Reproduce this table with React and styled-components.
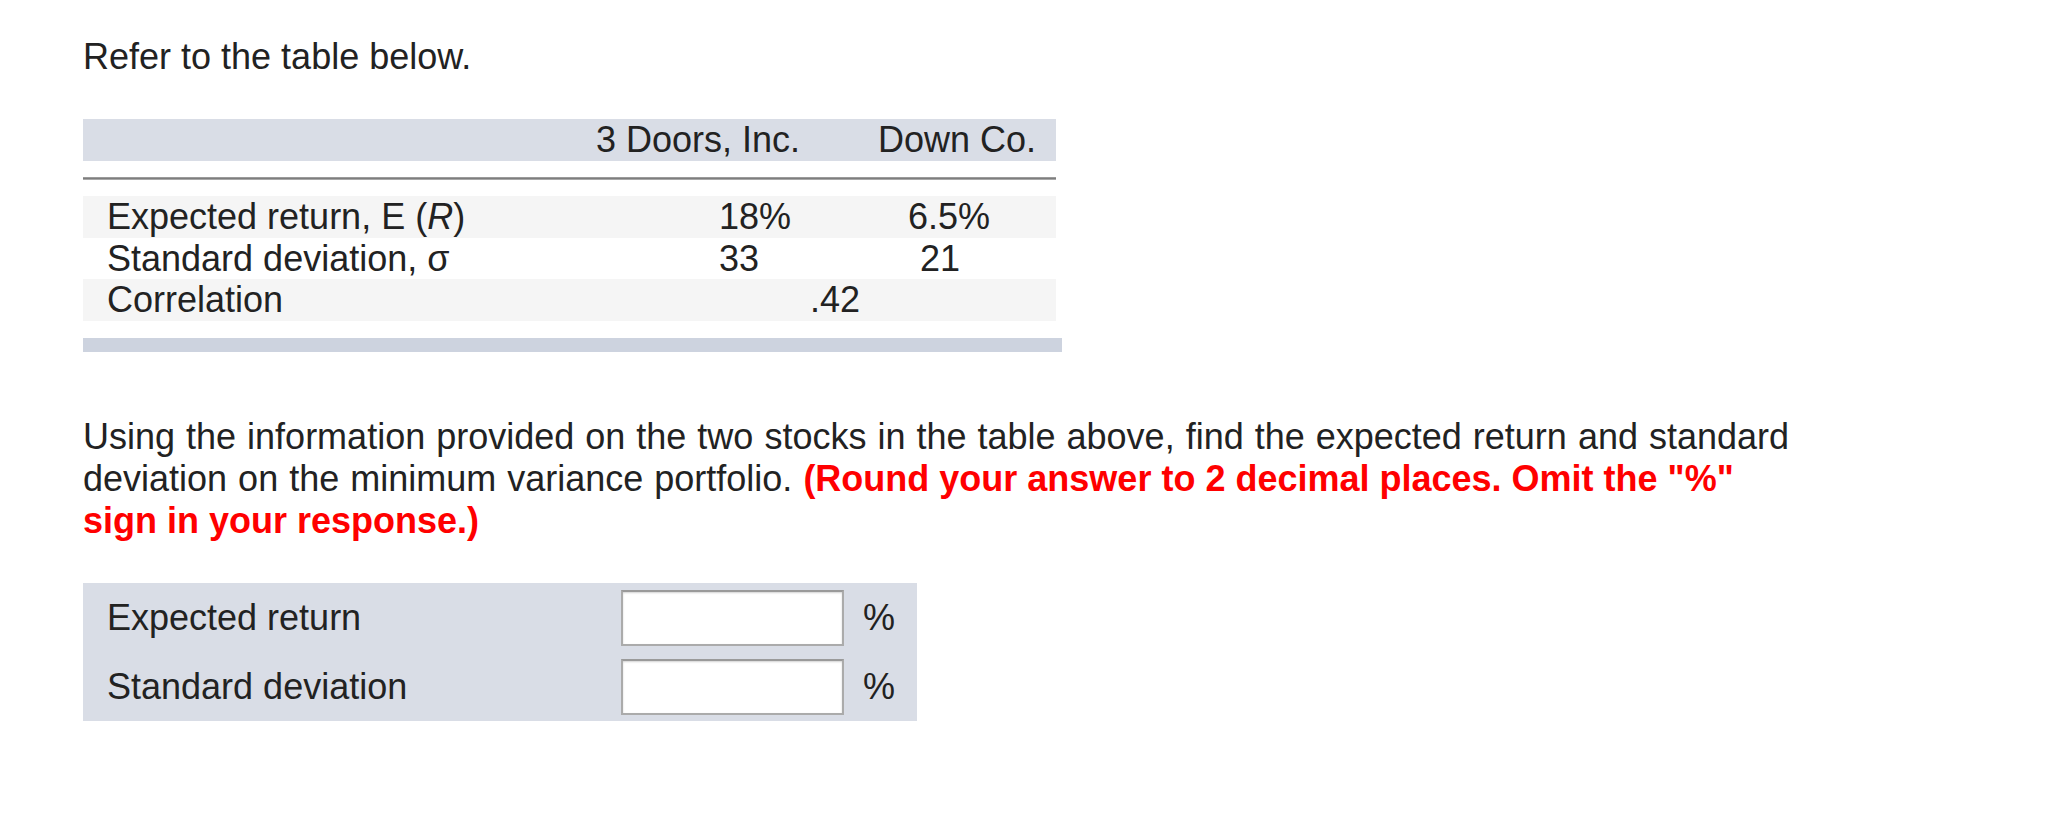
import React from "react";
import styled, { createGlobalStyle } from "styled-components";

const Global = createGlobalStyle`
  html, body { margin: 0; padding: 0; background: #ffffff; }
  body { font-family: "Liberation Sans", Arial, Helvetica, sans-serif; color: #222222; }
  * { box-sizing: border-box; }
`;

const Page = styled.div`
  width: 2046px;
  height: 820px;
  padding: 36px 0 0 83px;
  display: flex;
  flex-direction: column;
  font-size: 36px;
  line-height: 42px;
`;

const Intro = styled.p`
  margin: 0;
`;

const Table = styled.div`
  margin-top: 41px;
  width: 973px;
  display: flex;
  flex-direction: column;
`;

const Row = styled.div`
  display: grid;
  grid-template-columns: 492px 275px 206px;
  height: ${(p) => p.$h || 42}px;
  align-items: center;
  background: ${(p) => p.$bg || "transparent"};
  white-space: nowrap;
`;

const Cell = styled.div`
  padding-left: ${(p) => p.$indent || 0}px;
  grid-column: ${(p) => (p.$span ? `span ${p.$span}` : "auto")};
`;

const Rule = styled.div`
  margin: 16px 0 16px;
  height: 3px;
  background: #7d7d7d;
  border-top: 1px solid #9a9a9a;
  border-bottom: 1px solid #a8a8a8;
`;

const BottomBar = styled.div`
  margin-top: 17px;
  width: 979px;
  height: 14px;
  background: #cdd3df;
`;

const Question = styled.p`
  margin: 64px 0 0;
  width: 1725px;
  word-spacing: 1px;
`;

const Emph = styled.strong`
  color: #ff0000;
  font-weight: bold;
  word-spacing: 0;
`;

const AnswerBox = styled.div`
  margin-top: 41px;
  width: 834px;
  padding: 7px 0 6px 24px;
  background: #d9dde6;
  display: grid;
  grid-template-columns: 514px 223px auto;
  grid-auto-rows: 56px;
  row-gap: 13px;
  align-items: center;
`;

const Field = styled.input`
  width: 223px;
  height: 56px;
  border: 2px solid #ababab;
  border-top-color: #9a9a9a;
  background: #ffffff;
  box-shadow: inset 0 1px 2px rgba(0, 0, 0, 0.18);
  margin: 0;
  padding: 0 8px;
  font: inherit;
  outline: none;
`;

const Unit = styled.span`
  padding-left: 19px;
`;

export default function App() {
  return (
    <>
      <Global />
      <Page>
        <Intro>Refer to the table below.</Intro>
        <Table>
          <Row $bg="#d9dde6">
            <Cell />
            <Cell $indent={21}>3 Doors, Inc.</Cell>
            <Cell $indent={28}>Down Co.</Cell>
          </Row>
          <Rule />
          <Row $bg="#f5f5f5">
            <Cell $indent={24}>
              Expected return, E (<i>R</i>)
            </Cell>
            <Cell $indent={144}>18%</Cell>
            <Cell $indent={58}>6.5%</Cell>
          </Row>
          <Row $h={41}>
            <Cell $indent={24}>Standard deviation, σ</Cell>
            <Cell $indent={144}>33</Cell>
            <Cell $indent={70}>21</Cell>
          </Row>
          <Row $bg="#f5f5f5">
            <Cell $indent={24}>Correlation</Cell>
            <Cell $indent={235} $span={2}>.42</Cell>
          </Row>
          <BottomBar />
        </Table>
        <Question>
          Using the information provided on the two stocks in the table above, find the expected
          return and standard deviation on the minimum variance portfolio.{" "}
          <Emph>(Round your answer to 2 decimal places. Omit the "%" sign in your response.)</Emph>
        </Question>
        <AnswerBox>
          <span>Expected return</span>
          <Field type="text" aria-label="Expected return" />
          <Unit>%</Unit>
          <span>Standard deviation</span>
          <Field type="text" aria-label="Standard deviation" />
          <Unit>%</Unit>
        </AnswerBox>
      </Page>
    </>
  );
}
